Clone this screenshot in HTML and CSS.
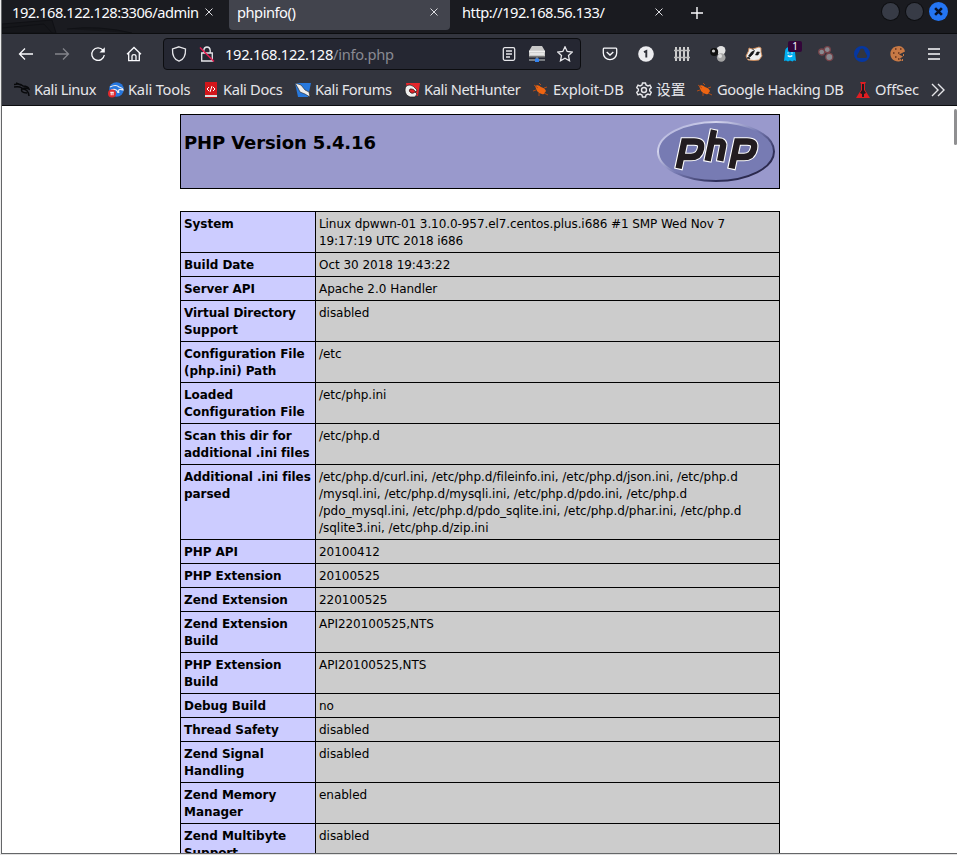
FILE: index.html
```
<!DOCTYPE html>
<html lang="en">
<head>
<meta charset="utf-8">
<title>phpinfo()</title>
<link rel="stylesheet" href="styles.css">
</head>
<body>
<div class="window">
  <header class="tabs">
    <svg class="dragon" viewBox="0 0 140 33"><path d="M0 24 50 20 54 33H0zM65 29q32-4 65 4M0 28l42-4 8 9" fill="#15161a" stroke="#101115"/></svg>
    <div class="tab first"><span>192.168.122.128:3306/admin</span><svg class="close" viewBox="0 0 8 8"><path d="M.5.5l7 7m0-7-7 7"/></svg></div>
    <div class="tab active"><span>phpinfo()</span><svg class="close" viewBox="0 0 8 8"><path d="M.5.5l7 7m0-7-7 7"/></svg></div>
    <div class="tab last"><span>http://192.168.56.133/</span><svg class="close" viewBox="0 0 8 8"><path d="M.5.5l7 7m0-7-7 7"/></svg></div>
    <svg class="plus" viewBox="0 0 12 12"><path d="M6 0v12M0 6h12"/></svg>
    <div class="controls"><i></i><i></i><i class="quit"><svg viewBox="0 0 8 8"><path d="M1 1l6 6m0-6L1 7"/></svg></i></div>
  </header>
  <nav class="toolbar">
    <svg class="ic back" viewBox="0 0 16 16"><path d="M15 8H1.5M7 2.5 1.5 8 7 13.5"/></svg>
    <svg class="ic dim" viewBox="0 0 16 16"><path d="M1 8h13.5M9 2.5 14.500 8 9 13.500"/></svg>
    <svg class="ic" viewBox="0 0 16 16"><path d="M13 4.200A6.300 6.300 0 1 0 14.300 9"/><path d="M9.500 6.500h5.300V1.300z" fill="#fbfbfe" stroke="none"/></svg>
    <svg class="ic" viewBox="0 0 16 16"><path d="M1 8.200 8 1.500l7 6.700M2.700 7v7.700h10.600V7M6 14.500V10q0-1.300 2-1.300T10 10v4.500"/></svg>
    <div class="url">
      <svg viewBox="0 0 16 16"><path d="M8 .8 14.500 3c.3 6-1.500 10.500-6.500 12.200C3 13.500 1.200 9 1.500 3z"/></svg>
      <svg viewBox="0 0 16 16" class="lock"><path d="M4.800 7V4.200Q5 1 8 1t3.200 3.200V7M2.700 7h10.600v8H2.700z"/><path d="M1 1.500 15 15.500" class="slash"/></svg>
      <span class="address">192.168.122.128<em>/info.php</em></span>
      <svg viewBox="0 0 16 16" class="reader"><rect x="2.300" y="1.700" width="11.400" height="12.600" rx="1.500"/><path d="M5 5h6M5 8h6M5 11h4"/></svg>
      <svg viewBox="0 0 16 16" class="drive"><path d="M3 0h10l3 5v5H0V5z" fill="#c8c8c8"/><path d="M0 5.500h16M1 8h14" stroke="#eee"/><path d="M0 10h16v1.500H0z" fill="#777"/><path d="M0 13h16v2H0zM7 11h2v3H7z" fill="#777b80"/><path d="M6 12.500h4V16H6z" fill="#3483ef"/></svg>
      <svg viewBox="0 0 16 16"><path d="m8 .8 2.200 4.700 5.100.6-3.800 3.500 1 5.200L8 12.200l-4.500 2.600 1-5.200L.7 6.100l5.100-.6z"/></svg>
    </div>
    <svg class="ic" viewBox="0 0 16 16"><path d="M2 2.200h12q.7 0 .7 1V7a6.700 6.700 0 0 1-13.400 0V3.200q0-1 .7-1zM4.700 6 8 9l3.300-3"/></svg>
    <svg class="ic" viewBox="0 0 16 16"><circle cx="8" cy="8" r="7.800" fill="#ededf0" stroke="none"/><path d="M6 6.200 8.300 5v6.600" stroke="#30323a" stroke-width="1.900"/></svg>
    <svg class="ic fence" viewBox="0 0 16 16"><path d="M2 1v14M6 1v14M10 1v14M14 1v14" stroke="#ccc" stroke-width="2"/><path d="M0 4.500h16M0 11.500h16" stroke="#bbb"/></svg>
    <svg class="ic" viewBox="0 0 16 16"><g stroke="none"><circle cx="11" cy="4.500" r="4.500" fill="#e2e2e2"/><circle cx="11.200" cy="11.500" r="4.300" fill="#a5a5a5"/><circle cx="10" cy="10" r="2" fill="#ddd"/><circle cx="4.200" cy="6" r="4" fill="#111"/><circle cx="3.500" cy="5" r="1.600" fill="#ccc"/></g></svg>
    <svg class="ic" viewBox="0 0 16 16"><path d="M0 10 2.500 5 3 2l3 1 4-1 3-1 2 1v4l1 4-3 4-5 .5-6-.5z" fill="#eee" stroke="#d08a55" stroke-width=".9"/><path d="m2.500 10 3-4 3-1.500L7 8l-3 3zM9.500 9 11 6h2.500L12 9zM1 12l2-1 1 2zM6 3l2 .5" fill="#16171b" stroke="#111" stroke-width=".6"/></svg>
    <div class="ghost"><svg class="ic" viewBox="0 0 16 16"><path d="M2 15 3 6Q3 1 8 1t5 5l1 9-2-.7-1.500 1.200L8 14.500l-2 1-2-1z" fill="#00aef0" stroke="none"/><path d="M5.700 9.500q2.300 2 4.600 0M6 6.500v1M10 6.500v1"/></svg><b>1</b></div>
    <svg class="ic" viewBox="0 0 16 16"><g fill="#888a90" stroke="#754349"><circle cx="3.700" cy="6" r="3"/><circle cx="9.300" cy="3.700" r="3"/><circle cx="11.300" cy="11" r="3.600"/></g></svg>
    <svg class="ic" viewBox="0 0 16 16"><path d="M8 0a8 8 0 1 1 0 16A8 8 0 0 1 8 0zM8 2.500Q5.500 2.500 5.500 5L3 9.500Q2.500 12 5 12h6q2.500 0 2-2.500L10.500 5Q10.500 2.500 8 2.500z" fill="#0637a0" fill-rule="evenodd" stroke="none"/></svg>
    <svg class="ic" viewBox="0 0 16 16"><path d="M9 0Q2 0 .5 6C-.5 12 4 16 9 15.500l3-1-2-2 3-2-4-2 6-3q-1-5-6-5.500z" fill="#c87945" stroke="none"/><path d="M5 3h1.500M3 7h1.500M8 7h1.500M5 11h1.500M10 3h1.500M8 13h1.500" stroke="#5e2f1c" stroke-width="1.700"/><path d="M13 9h1M12 14h1" stroke="#c87945" stroke-width="2"/></svg>
    <svg class="ic" viewBox="0 0 16 16"><path d="M2 3h12M2 8h12M2 13h12"/></svg>
  </nav>
  <nav class="bookmarks">
    <a class="bm b1"><svg viewBox="0 0 16 16"><path d="M0 2.500Q6 1 9 4q5 0 6 3-5-2-6 0 5 0 6 7M0 5q5-1 8 1-2 5 5 5M2 1l5 2" fill="none" stroke="#08090b" stroke-width="1.500"/></svg><span>Kali Linux</span></a>
    <a class="bm b2"><svg viewBox="0 0 16 16"><circle cx="8.500" cy="7.500" r="7.300" fill="#2677df"/><path d="M2 5q6-3 9 0 4 1 4 3-6-2-4 3M3 8q6-2 7 3" fill="none" stroke="#eee" stroke-width="1.200"/><circle cx="4" cy="11.500" r="4" fill="#e12a2e"/><path d="M2.300 10.300h3.400M3.200 10.300v3M5 10.300v3" stroke="#fff"/></svg><span>Kali Tools</span></a>
    <a class="bm b3"><svg viewBox="0 0 16 16"><path d="M2 0h12v13H2z" fill="#d3161b"/><path d="M2 13h12v2H2z" fill="#ddd"/><path d="M2 15h12v1H2z" fill="#b20e12"/><path d="m6 5-2 2 2 2m4-4 2 2-2 2M9 4 7 10" fill="none" stroke="#fff"/></svg><span>Kali Docs</span></a>
    <a class="bm b4"><svg viewBox="0 0 16 16"><path d="M0 1h16l-3 14H3z" fill="#2778dc"/><path d="M0 1 6 3l4 5 4 2 1 5-5-3-5-2-2-4z" fill="#eee" stroke="#222" stroke-width=".6"/></svg><span>Kali Forums</span></a>
    <a class="bm b5"><svg viewBox="0 0 16 16"><path d="M2 1h14l-2 13H4z" fill="#e4252b"/><path d="M1 8q0-5 5-5 3 0 7 5l-1 2q-3-4-6-3-2 2 1 4 2 1 4-1l2 2-2 3H6q-5-2-5-7z" fill="#eee" stroke="#171717" stroke-width=".7"/></svg><span>Kali NetHunter</span></a>
    <a class="bm b6"><svg viewBox="0 0 16 16"><path d="M2 4q3-2 6 1 4 1 5 4l-2 3q-4 1-7-3z" fill="#ee6512"/><path d="m1 3 4 3M8 3 6 1m5 5 3-1M3 8 0 9m6 2v3m5-3 4 2" stroke="#ad4c19"/></svg><span>Exploit-DB</span></a>
    <a class="bm b7"><svg viewBox="0 0 16 16"><path d="m6.500 1h3l.5 2 2 .9 2-.7 1.300 2.500L13.700 7v2l1.600 1.300-1.300 2.500-2-.7-2 .9-.5 2h-3L6 13l-2-.9-2 .7-1.300-2.500L2.300 9V7L.7 5.700 2 3.200l2 .7L6 3z" class="line"/><circle cx="8" cy="8" r="2.500" class="line"/></svg><span>设置</span></a>
    <a class="bm b8"><svg viewBox="0 0 16 16"><path d="M2 4q3-2 6 1 4 1 5 4l-2 3q-4 1-7-3z" fill="#ee6512"/><path d="m1 3 4 3M8 3 6 1m5 5 3-1M3 8 0 9m6 2v3m5-3 4 2" stroke="#ad4c19"/></svg><span>Google Hacking DB</span></a>
    <a class="bm b9"><svg viewBox="0 0 16 16"><path d="M5 0h6l-1 2v6l5 8H1l5-8V2z" fill="#e01d22"/><path d="M7 2h2v6l2 3-2 1v3H7v-3l-2-1 2-3z" fill="#24191e"/></svg><span>OffSec</span></a>
    <svg class="more" viewBox="0 0 14 14"><path d="m1 1 6 6-6 6M7 1l6 6-6 6"/></svg>
  </nav>
  <main class="page">
    <div class="scroll"></div>
    <div class="banner"><h1>PHP Version 5.4.16</h1>
      <svg class="php" viewBox="0 0 120 67"><defs><linearGradient id="rim" x1="0" y1="0" x2="1" y2="1"><stop offset="0" stop-color="#999bce"/><stop offset=".25" stop-color="#d4d5ed"/><stop offset=".5" stop-color="#777bb3"/><stop offset=".75" stop-color="#30305b"/><stop offset="1" stop-color="#24203a"/></linearGradient></defs><ellipse cx="60" cy="33.500" rx="58" ry="29.500" fill="#777bb3" stroke="url(#rim)" stroke-width="2"/>
      <g fill="none"><g class="halo"><path d="M22.300 51.500 28.300 23.500H38c6 0 8 2 7 7s-4 8.500-10 8.500H27"/><path d="m51.300 44 6.800-33M56 23.500h7q5 0 4 5L64 44"/><path d="M75.300 51.500 81.300 23.500H91c6 0 8 2 7 7s-4 8.500-10 8.500H80"/></g><g class="ink"><path d="M22.600 50.300 28.300 23.500H38c6 0 8 2 7 7s-4 8.500-10 8.500H27"/><path d="m51.600 42.800 6.400-30.800M56 23.500h7q5 0 4 5l-2.800 14.300"/><path d="M75.600 50.300 81.300 23.500H91c6 0 8 2 7 7s-4 8.500-10 8.500H80"/></g></g></svg>
    </div>
    <table>
      <tr><th>System</th><td><span class="system">Linux dpwwn-01 3.10.0-957.el7.centos.plus.i686 #1 SMP Wed Nov 7<br>19:17:19 UTC 2018 i686</span></td></tr>
      <tr><th>Build Date</th><td>Oct 30 2018 19:43:22</td></tr>
      <tr><th>Server API</th><td>Apache 2.0 Handler</td></tr>
      <tr><th>Virtual Directory<br>Support</th><td>disabled</td></tr>
      <tr><th>Configuration File<br>(php.ini) Path</th><td>/etc</td></tr>
      <tr><th>Loaded<br>Configuration File</th><td>/etc/php.ini</td></tr>
      <tr><th>Scan this dir for<br>additional .ini files</th><td>/etc/php.d</td></tr>
      <tr><th>Additional .ini files<br>parsed</th><td>/etc/php.d/curl.ini, /etc/php.d/fileinfo.ini, /etc/php.d/json.ini, /etc/php.d<br>/mysql.ini, /etc/php.d/mysqli.ini, /etc/php.d/pdo.ini, /etc/php.d<br>/pdo_mysql.ini, /etc/php.d/pdo_sqlite.ini, /etc/php.d/phar.ini, /etc/php.d<br>/sqlite3.ini, /etc/php.d/zip.ini</td></tr>
      <tr><th>PHP API</th><td>20100412</td></tr>
      <tr><th>PHP Extension</th><td>20100525</td></tr>
      <tr><th>Zend Extension</th><td>220100525</td></tr>
      <tr><th>Zend Extension<br>Build</th><td>API220100525,NTS</td></tr>
      <tr><th>PHP Extension<br>Build</th><td>API20100525,NTS</td></tr>
      <tr><th>Debug Build</th><td>no</td></tr>
      <tr><th>Thread Safety</th><td>disabled</td></tr>
      <tr><th>Zend Signal<br>Handling</th><td>disabled</td></tr>
      <tr><th>Zend Memory<br>Manager</th><td>enabled</td></tr>
      <tr><th>Zend Multibyte<br>Support</th><td>disabled</td></tr>
    </table>
  </main>
</div>
</body>
</html>
```
FILE: styles.css
```
* { box-sizing: border-box; }
body { margin: 0; width: 957px; height: 855px; overflow: hidden; background: #e2e2e2; }
svg { display: block; flex: none; }
.window { margin-left: 1px; height: 854px; border-left: 1px solid #646668; border-bottom: 1px solid #646668; box-shadow: -1px 0 #eee; overflow: hidden; display: flex; flex-direction: column; font: 14.67px "Noto Sans", "Noto Sans CJK SC", sans-serif; color: #fbfbfe; }
.tabs { position: relative; display: flex; height: 34px; flex: none; background: #1a1b20; border-bottom: 1px solid #0c0d0f; }
.dragon { position: absolute; left: 0; top: 0; width: 140px; height: 33px; }
.tab { position: relative; display: flex; justify-content: space-between; height: 30px; width: 221px; padding: 0 12px 0 8px; line-height: 25px; letter-spacing: -.48px; white-space: nowrap; }
.tab.first { width: 227px; padding: 0 16px 0 10px; }
.tab.active { background: #42444d; border-radius: 0 0 4px 4px; }
.tab.last { width: 233px; padding: 0 20px 0 12px; }
.close { width: 8px; height: 8px; margin-top: 8px; stroke: #dddde1; fill: none; }
.plus { width: 12px; height: 12px; margin: 7px 0 0 8px; stroke: #fbfbfe; stroke-width: 1.4; }
.controls { display: flex; gap: 7px; margin: 3px 0 0 auto; padding-right: 10px; }
.controls i { width: 17px; height: 17px; border-radius: 50%; background: #373b46; box-shadow: 0 0 0 1px #0e0f12; }
.controls .quit { background: #2475f2; box-shadow: 0 0 0 1px #2475f2; padding: 4px; }
.quit svg { width: 9px; height: 9px; stroke: #091226; stroke-width: 2.3; }
.toolbar { display: flex; align-items: center; height: 40px; padding-left: 6px; flex: none; background: #33353e; }
.ic { width: 36px; height: 16px; fill: none; stroke: #fbfbfe; stroke-width: 1.3; }
.dim { opacity: .4; }
.url { display: flex; align-items: center; width: 418px; height: 32px; margin: 0 11px; padding: 0 7px; border: 1px solid #0c0d10; border-radius: 4px; background: #252732; }
.url svg { width: 16px; height: 16px; fill: none; stroke: #e6e6ea; stroke-width: 1.3; }
.url .lock { margin-left: 12px; }
.url .slash { stroke: #e81c51; stroke-width: 1.5; }
.url .drive { stroke: none; margin: 0 12px; }
.address { margin-left: 10px; flex: 1; letter-spacing: -.29px; }
.address em { font-style: normal; color: #898a92; }
.ghost { position: relative; }
.ghost b { position: absolute; left: 16px; top: -5px; width: 14px; height: 11px; background: #330539; border-radius: 2px; font: 10px/11px "Noto Sans"; text-align: center; }
.bookmarks { display: flex; height: 32px; flex: none; padding-left: 12px; background: #33353e; border-bottom: 1px solid #0c0d10; line-height: 31px; letter-spacing: -.4px; white-space: nowrap; color: #e6e6ea; }
.bm { display: flex; align-items: center; gap: 4px; flex: none; }
.bm svg { width: 16px; height: 16px; }
.b1 { width: 94px; } .b2 { width: 95px; letter-spacing: -.2px; } .b3 { width: 92px; letter-spacing: -.33px; } .b4 { width: 109px; } .b5 { width: 129px; } .b6 { width: 103px; letter-spacing: -.1px; } .b7 { width: 61px; letter-spacing: 0; } .b8 { width: 158px; } .b9 { width: 76px; letter-spacing: -.15px; }
.bm .line, .more { fill: none; stroke: #e6e6ea; stroke-width: 1.4; }
.more { width: 14px; height: 14px; margin-top: 9px; }
.page { position: relative; flex: 1; min-height: 0; overflow: hidden; padding: 8px 0 0 178px; background: #fff; color: #000; font: 12px/17px "DejaVu Sans", sans-serif; }
.banner { display: flex; justify-content: space-between; width: 600px; height: 75px; padding: 3px; border: 1px solid #000; background: #9999cc; }
h1 { margin: 14px 0 0; font-size: 18px; line-height: 22px; letter-spacing: -.11px; }
.php { width: 120px; height: 67px; }
.halo { stroke: #fff; stroke-width: 8.6; }
.ink { stroke: #221c20; stroke-width: 6.4; }
table { width: 600px; margin-top: 22px; table-layout: fixed; border-collapse: collapse; }
th, td { padding: 4px 3px 2px; border: 1px solid #000; text-align: left; vertical-align: top; white-space: nowrap; letter-spacing: -.03px; }
th { width: 135px; letter-spacing: -.05px; background: #ccccff; }
td { background: #cccccc; }
.system { letter-spacing: -.08px; }
.scroll { position: absolute; right: 0; top: 3px; width: 3px; height: 36px; border-radius: 2px; background: #8f8f91; }
```
